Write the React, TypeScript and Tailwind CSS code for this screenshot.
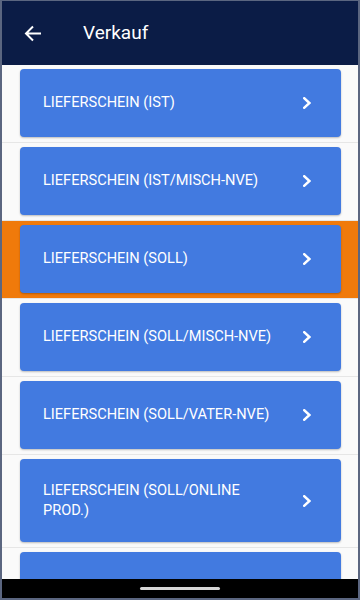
const items = [
  "LIEFERSCHEIN (IST)",
  "LIEFERSCHEIN (IST/MISCH-NVE)",
  "LIEFERSCHEIN (SOLL)",
  "LIEFERSCHEIN (SOLL/MISCH-NVE)",
  "LIEFERSCHEIN (SOLL/VATER-NVE)",
  "LIEFERSCHEIN (SOLL/ONLINE PROD.)",
  "",
];

function Chevron() {
  return (
    <svg width="8" height="12" viewBox="0 0 8 12" fill="none" className="shrink-0">
      <path d="M1.2 1.2 L6.4 6 L1.2 10.8" stroke="white" strokeWidth="2.4" strokeLinecap="square" />
    </svg>
  );
}

function Row({ label, active }: { label: string; active?: boolean }) {
  return (
    <div
      className={
        active
          ? "pt-[4px] pb-[5px] pl-[18px] pr-[17px] bg-[#f07a0b] border-b border-[#e6e6e6]"
          : "pt-[4px] pb-[5px] pl-[18px] pr-[17px] border-b border-[#e6e6e6]"
      }
    >
      <div className="min-h-[68px] py-[22px] pl-[23px] pr-[30px] flex items-center rounded-[4px] bg-[#427ae0] shadow-[0_1px_2px_rgba(0,0,0,0.25)]">
        <span className="flex-1 mr-[24px] text-white text-[14.6px] leading-[19.5px]">{label}</span>
        {label && <Chevron />}
      </div>
    </div>
  );
}

export default function App() {
  return (
    <div
      className="w-[360px] h-[600px] flex flex-col overflow-hidden bg-[#fafafa] border-t border-x-2 border-b-2 border-[#5b6680]"
      style={{ fontFamily: "Roboto, 'Liberation Sans', sans-serif" }}
    >
      <header className="h-[64px] shrink-0 flex items-center bg-[#0b1c46] pl-[22px]">
        <svg width="18" height="17" viewBox="0 0 18 17" fill="none">
          <path d="M17 8.5 H2 M9 1.5 L2 8.5 L9 15.5" stroke="white" strokeWidth="2" strokeLinejoin="miter" />
        </svg>
        <h1 className="ml-[41px] text-white text-[19px] font-normal">Verkauf</h1>
      </header>
      <div className="flex-1 overflow-hidden">
        {items.map((label, i) => (
          <Row key={i} label={label} active={i === 2} />
        ))}
      </div>
      <div className="h-[19px] shrink-0 bg-black flex items-center justify-center">
        <div className="w-[80px] h-[3px] rounded-full bg-[#d6d6d6]" />
      </div>
    </div>
  );
}
